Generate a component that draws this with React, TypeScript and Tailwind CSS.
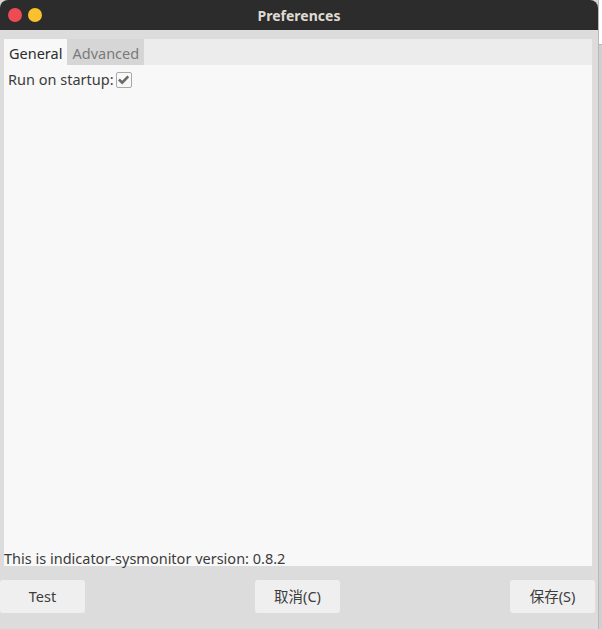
import React from 'react';

const font = { fontFamily: '"Noto Sans", "Noto Sans CJK SC", sans-serif' };

export default function App() {
  return (
    <div className="flex w-[602px] h-[629px] bg-[#d6d6d6]" style={font}>
      <div className="flex flex-col w-[598px] h-full">
        <div className="relative flex items-center justify-center h-[30px] bg-[#2c2c2c] rounded-t-[8px]">
          <div className="absolute left-[8px] top-[8px] flex gap-[6px]">
            <span className="w-[14px] h-[14px] rounded-full bg-[#ef4b55]" />
            <span className="w-[14px] h-[14px] rounded-full bg-[#fbc02d]" />
          </div>
          <span className="text-[14px] font-bold text-[#dfdbd2]">Preferences</span>
        </div>
        <div className="flex flex-col flex-1 bg-[#dcdcdc]">
          <div className="flex flex-col h-[527px] mt-[9px] ml-[4px] mr-[6px]">
            <div className="flex h-[26px] bg-[#ececec] text-[14.5px] leading-[26px]">
              <div className="flex items-center pt-[1px] px-[5px] bg-[#f8f8f8] text-[#2c2c2c]">General</div>
              <div className="flex items-center pt-[1px] px-[5px] bg-[#d6d6d6] text-[#7a7a7a]">Advanced</div>
            </div>
            <div className="flex flex-col justify-between flex-1 bg-[#f8f8f8] text-[14.5px] text-[#3c3c3c]">
              <div className="flex items-center gap-[2px] pl-[4px] pt-[4px]">
                <span>Run on startup:</span>
                <span className="flex items-center justify-center w-[16px] h-[16px] border border-[#a8a8a8] rounded-[2px] bg-[#f8f8f8]">
                  <svg width="13" height="13" viewBox="0 0 12 12">
                    <path d="M1.8 6 L4.8 9 L10.4 3.2" fill="none" stroke="#6a6a6a" strokeWidth="2.4" />
                  </svg>
                </span>
              </div>
              <div className="leading-[14px] pb-[1px]">This is indicator-sysmonitor version: 0.8.2</div>
            </div>
          </div>
          <div className="flex justify-between mt-[14px] pr-[3px] text-[14.5px] text-[#3c3c3c]">
            <button className="w-[85px] h-[33px] bg-[#efefef] rounded-[3px]">Test</button>
            <button className="w-[85px] h-[33px] bg-[#efefef] rounded-[3px]">取消(C)</button>
            <button className="w-[85px] h-[33px] bg-[#efefef] rounded-[3px]">保存(S)</button>
          </div>
        </div>
      </div>
      <div className="flex flex-col w-[4px] h-full">
        <div className="h-[44px] bg-white border-l border-[#b8b8b8]" />
        <div className="flex-1 bg-[#d0d0d0] border-t border-l border-[#b8b8b8]" />
      </div>
    </div>
  );
}
